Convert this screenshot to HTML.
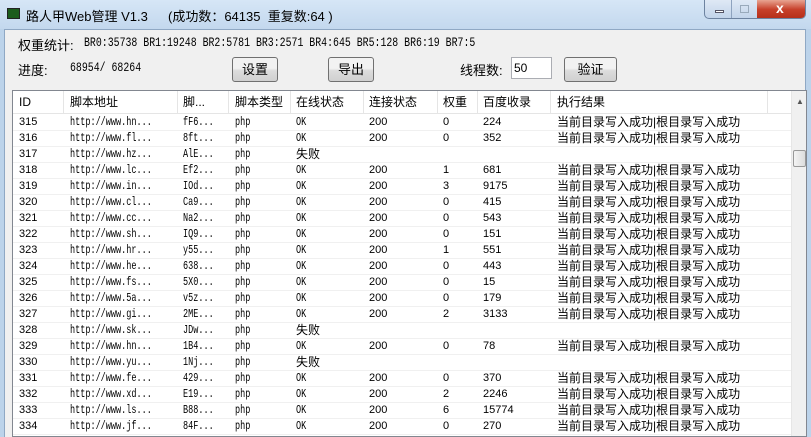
<!DOCTYPE html><html><head><meta charset="utf-8"><style>
*{margin:0;padding:0;box-sizing:border-box}
body{width:811px;height:437px;overflow:hidden;background:#bcd3ea;font-family:"Liberation Sans","Noto Sans CJK SC",sans-serif;font-size:12px;color:#000;position:relative}
.title{position:absolute;left:0;top:0;width:811px;height:29px;background:linear-gradient(#d6e6f6,#c3d8ee)}
.client{position:absolute;left:4px;top:29px;width:802px;height:408px;background:#f0f0f0;border-left:1px solid #8fa8c4;border-top:1px solid #8fa8c4;border-right:1px solid #8fa8c4}
.t{position:absolute;white-space:nowrap}
.mono{font-family:"Liberation Mono",monospace;font-size:13px;transform:scaleX(0.76);transform-origin:left top}
.btn{position:absolute;height:25px;border:1px solid #707070;border-radius:3px;background:linear-gradient(#f2f2f2 45%,#dcdcdc 55%,#d0d0d0);text-align:center;line-height:23px;font-size:13px}
.list{position:absolute;left:12px;top:90px;width:795px;height:347px;background:#fff;border:1px solid #828790;overflow:hidden}
.hdr{position:absolute;left:0;top:0;height:23px;width:780px;background:#fff;border-bottom:1px solid #e5e5e5}
.hs{position:absolute;top:0;width:1px;height:23px;background:#e5e5e5}
.row{position:absolute;left:0;width:778px;height:16px;border-bottom:1px solid #f0f0f0}
.c{position:absolute;top:0;white-space:nowrap;font-size:11px;line-height:15px}
.m{font-family:"Liberation Mono",monospace;font-size:12px;transform:scaleX(0.71);transform-origin:left top}
.z{font-size:12px;line-height:15px}
.sb{position:absolute;left:778px;top:0;width:16px;height:347px;background:#f0f0f0;border-left:1px solid #e6e6e6}
</style></head><body>
<div class="title">
<div style="position:absolute;left:7px;top:8px;width:13px;height:11px;background:#1c5c1c;border:1px solid #222"></div>
<div class="t" style="left:26px;top:6px;font-size:13px">路人甲Web管理 V1.3</div>
<div class="t" style="left:168px;top:6px;font-size:13px">(成功数：64135 &nbsp;重复数:64 )</div>
<div style="position:absolute;left:704px;top:0;width:102px;height:19px;border:1px solid #6d83a0;border-top:none;border-radius:0 0 5px 5px;overflow:hidden;background:linear-gradient(#dfe9f5,#c2d4ea)">
<div style="position:absolute;left:26px;top:0;width:1px;height:19px;background:#8ea3bf"></div>
<div style="position:absolute;left:52px;top:0;width:50px;height:19px;background:linear-gradient(#e8a491,#c7402a 50%,#b42d18)"></div>
<div style="position:absolute;left:10px;top:10px;width:9px;height:3px;background:#fff;border:1px solid #556"></div>
<div style="position:absolute;left:35px;top:5px;width:9px;height:8px;border:1px solid #9ab"></div>
<div class="t" style="left:71px;top:0;color:#fff;font-size:14px;font-weight:bold">x</div>
</div>
</div>
<div class="client"></div>
<div class="t" style="left:18px;top:35px;font-size:13px">权重统计:</div>
<div class="t mono" style="left:84px;top:35px">BR0:35738 BR1:19248 BR2:5781 BR3:2571 BR4:645 BR5:128 BR6:19 BR7:5</div>
<div class="t" style="left:18px;top:60px;font-size:13px">进度:</div>
<div class="t mono" style="left:70px;top:60px">68954/ 68264</div>
<div class="btn" style="left:232px;top:57px;width:46px">设置</div>
<div class="btn" style="left:328px;top:57px;width:46px">导出</div>
<div class="t" style="left:460px;top:60px;font-size:13px">线程数:</div>
<div style="position:absolute;left:511px;top:57px;width:41px;height:22px;background:#fff;border:1px solid #abadb3"><span class="t" style="left:2px;top:3px">50</span></div>
<div class="btn" style="left:564px;top:57px;width:53px">验证</div>
<div class="list">
<div class="hdr">
<span class="c" style="left:6px;top:4px;font-size:12px">ID</span>
<span class="c" style="left:57px;top:4px;font-size:12px">脚本地址</span>
<span class="c" style="left:170px;top:4px;font-size:12px">脚...</span>
<span class="c" style="left:222px;top:4px;font-size:12px">脚本类型</span>
<span class="c" style="left:283px;top:4px;font-size:12px">在线状态</span>
<span class="c" style="left:356px;top:4px;font-size:12px">连接状态</span>
<span class="c" style="left:430px;top:4px;font-size:12px">权重</span>
<span class="c" style="left:470px;top:4px;font-size:12px">百度收录</span>
<span class="c" style="left:544px;top:4px;font-size:12px">执行结果</span>
<div class="hs" style="left:50px"></div><div class="hs" style="left:164px"></div><div class="hs" style="left:215px"></div><div class="hs" style="left:277px"></div><div class="hs" style="left:350px"></div><div class="hs" style="left:424px"></div><div class="hs" style="left:464px"></div><div class="hs" style="left:537px"></div><div class="hs" style="left:754px"></div>
</div>
<div id="rows"></div>
<div class="sb">
<div style="position:absolute;left:4px;top:6px;font-size:8px;color:#555">▲</div>
<div style="position:absolute;left:1px;top:59px;width:13px;height:17px;border:1px solid #999;border-radius:2px;background:linear-gradient(90deg,#f4f4f4,#dcdcdc)"></div>
</div>
</div>
<script>
var d=[["315","hn","fF6","OK","0","224"],["316","fl","8ft","OK","0","352"],["317","hz","AlE","",""],["318","lc","Ef2","OK","1","681"],["319","in","IOd","OK","3","9175"],["320","cl","Ca9","OK","0","415"],["321","cc","Na2","OK","0","543"],["322","sh","IQ9","OK","0","151"],["323","hr","y55","OK","1","551"],["324","he","638","OK","0","443"],["325","fs","5X0","OK","0","15"],["326","5a","v5z","OK","0","179"],["327","gi","2ME","OK","2","3133"],["328","sk","JDw","",""],["329","hn","1B4","OK","0","78"],["330","yu","1Nj","",""],["331","fe","429","OK","0","370"],["332","xd","E19","OK","2","2246"],["333","ls","B88","OK","6","15774"],["334","jf","84F","OK","0","270"]];
var h="";d.forEach(function(r,i){var t=24+i*16;var ok=r[3]=="OK";
h+='<div class="row" style="top:'+t+'px"><span class="c" style="left:6px">'+r[0]+'</span><span class="c m" style="left:57px">http://www.'+r[1]+'...</span><span class="c m" style="left:170px">'+r[2]+'...</span><span class="c m" style="left:222px">php</span>'+(ok?'<span class="c m" style="left:283px">OK</span><span class="c" style="left:356px">200</span><span class="c" style="left:430px">'+r[4]+'</span><span class="c" style="left:470px">'+r[5]+'</span><span class="c z" style="left:544px">当前目录写入成功|根目录写入成功</span>':'<span class="c z" style="left:283px">失败</span>')+'</div>';});
document.getElementById("rows").innerHTML=h;
</script>
</body></html>
